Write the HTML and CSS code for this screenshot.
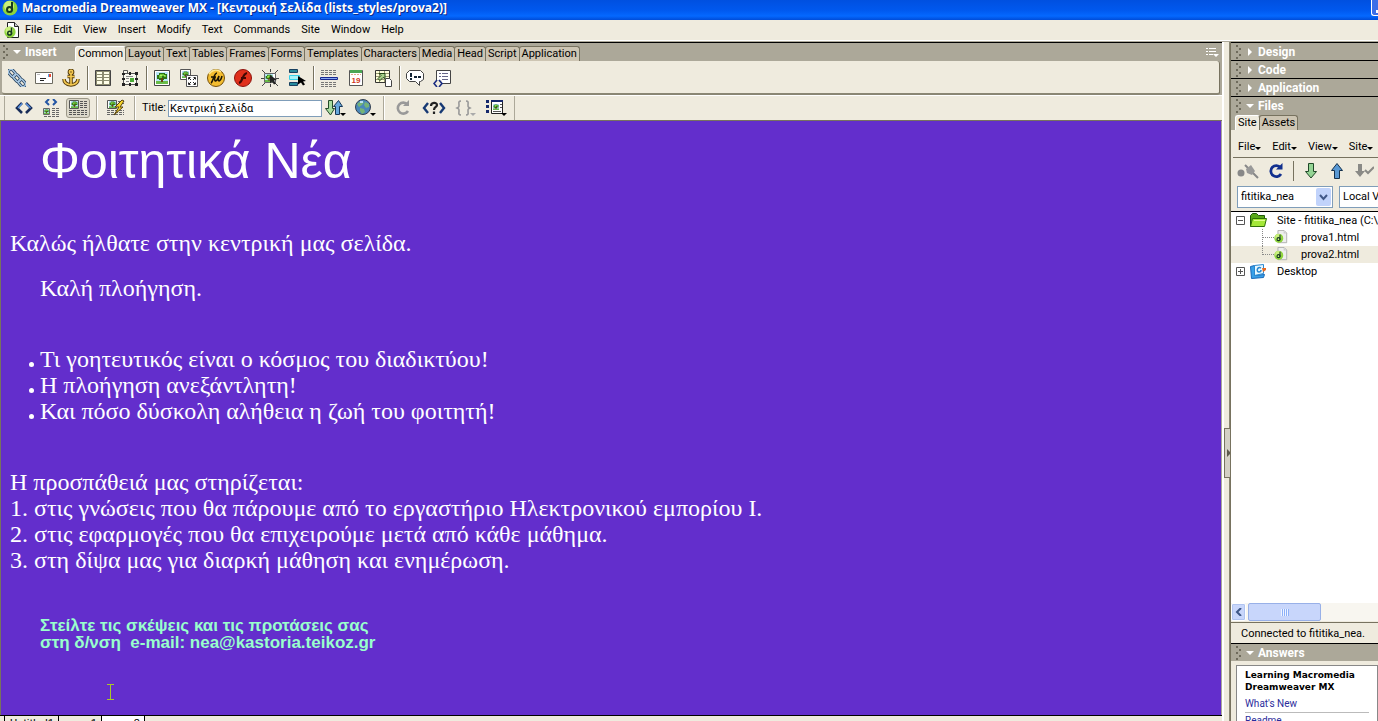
FILE: index.html
```
<!DOCTYPE html>
<html lang="el">
<head>
<meta charset="utf-8">
<title>Macromedia Dreamweaver MX</title>
<link rel="stylesheet" href="styles.css">
</head>
<body>
<svg class="defs" aria-hidden="true">
  <symbol id="tree" viewBox="0 0 12 12"><path fill="#b8e4f8" d="M0 0h12v12H0z"/><path fill="#68bc48" d="M0 9h12v3H0z"/><path fill="#2c7418" d="M3 1h6v1h2v5H8v1H3V7H1V3h2z"/><path fill="#70c838" d="M4 2h4v1h2v2H8V4H6v2H3V3h1z"/><path fill="#b0f068" d="M4 3h2v1H4zM8 3h1v1H8z"/><path fill="#694010" d="M5 6h2v4H5z"/></symbol>
  <symbol id="globe-d" viewBox="0 0 16 16"><circle cx="8" cy="8" r="7.5" fill="#8ed43c"/><circle cx="7" cy="6" r="5" fill="#c9f07c"/><path d="M10 2v8.500" stroke="#173a20" stroke-width="2"/><circle cx="7.500" cy="9.500" r="2.500" fill="none" stroke="#173a20" stroke-width="2"/></symbol>
  <symbol id="doc" viewBox="0 0 16 16"><path fill="#eee" stroke="#aaa" d="M4.500.5h7l3 3v11h-10z"/><path fill="#ccc" d="M11 1v3h3z"/><use href="#globe-d" x="0" y="4" width="11" height="11"/></symbol>
  <symbol id="grip" viewBox="0 0 6 14"><path fill="#6f6b5c" d="M0 0h2v2H0zM3 3h2v2H3zM0 6h2v2H0zM3 9h2v2H3zM0 12h2v2H0z"/></symbol>
</svg>

<header class="titlebar">
  <svg class="icon16" viewBox="0 0 16 16"><use href="#globe-d"/></svg>
  <h1 class="title">Macromedia Dreamweaver MX - [Κεντρική Σελίδα (lists_styles/prova2)]</h1>
  <button class="min" aria-label="Minimize"></button>
</header>

<nav class="menubar">
  <svg class="icon16" viewBox="0 0 16 16"><path fill="#fff" stroke="#222" d="M3.500.5h7l4 4v11h-11z"/><path fill="#ccc" stroke="#222" d="M10.500.5v4h4"/><use href="#globe-d" x="0" y="4" width="12" height="12"/></svg>
  <button>File</button><button>Edit</button><button>View</button><button>Insert</button><button>Modify</button><button>Text</button><button>Commands</button><button>Site</button><button>Window</button><button>Help</button>
</nav>

<div class="workspace">
<main class="left">
  <div class="insert-head">
    <svg class="grip" viewBox="0 0 6 14"><use href="#grip"/></svg>
    <svg class="tri" viewBox="0 0 8 8"><path fill="#fff" d="M0 2h8L4 6z"/></svg>
    <span class="panel-name insert-name">Insert</span>
    <div class="tabs">
      <button class="tab on">Common</button><button class="tab">Layout</button><button class="tab">Text</button><button class="tab">Tables</button><button class="tab">Frames</button><button class="tab">Forms</button><button class="tab">Templates</button><button class="tab">Characters</button><button class="tab">Media</button><button class="tab">Head</button><button class="tab">Script</button><button class="tab">Application</button>
    </div>
    <button class="options" aria-label="Options"><svg width="13" height="11" viewBox="0 0 13 11"><path fill="#fff" d="M0 1h2v1H0zM3 1h7v1H3zM0 4h2v1H0zM3 4h7v1H3zM0 7h2v1H0zM3 7h4v1H3zM7 7h6L10 10z"/></svg></button>
  </div>

  <div class="insert-bar">
    <div class="group">
      <button aria-label="Hyperlink"><svg viewBox="0 0 18 18" fill="none"><g stroke="#26405c" stroke-width="3"><rect x="-4" y="-2.500" width="8" height="5" rx="2.500" transform="translate(4 4) rotate(48)"/><rect x="-4" y="-2.500" width="8" height="5" rx="2.500" transform="translate(9 9) rotate(48)"/><rect x="-4" y="-2.500" width="8" height="5" rx="2.500" transform="translate(14 14) rotate(48)"/></g><g stroke="#a8c8e4" stroke-width="1.400"><rect x="-4" y="-2.500" width="8" height="5" rx="2.500" transform="translate(4 4) rotate(48)"/><rect x="-4" y="-2.500" width="8" height="5" rx="2.500" transform="translate(9 9) rotate(48)"/><rect x="-4" y="-2.500" width="8" height="5" rx="2.500" transform="translate(14 14) rotate(48)"/></g></svg></button>
      <button aria-label="Email Link"><svg viewBox="0 0 18 18"><path fill="#fff" stroke="#6c6a60" d="M.5 3.500h17v11H.5z"/><path fill="#e84830" d="M13 5h3v3h-3z"/><path fill="#58a8e8" d="M13 5h1v3h-1z"/><path stroke="#222" d="M5 9.500h6M5 11.500h4"/><path stroke="#bbb" d="M2 5.500h3"/></svg></button>
      <button aria-label="Named Anchor"><svg viewBox="0 0 18 18" fill="none"><g stroke="#5a4210" stroke-width="3.600"><circle cx="9" cy="3" r="1.600"/><path d="M9 5v11M5.500 7.500h7M2 10c0 4 3 5.500 7 6 4-.5 7-2 7-6"/></g><g stroke="#f4c850" stroke-width="1.600"><circle cx="9" cy="3" r="1.600"/><path d="M9 5v11M5.500 7.500h7M2 10c0 4 3 5.500 7 6 4-.5 7-2 7-6"/></g></svg></button>
    </div>
    <div class="group">
      <button aria-label="Table"><svg viewBox="0 0 18 18"><path fill="#8c8c70" stroke="#444" d="M1.500 1.500h15v15h-15z"/><path fill="#ffffe8" d="M3 3h5v2H3zM10 3h5v2h-5zM3 6h5v2H3zM10 6h5v2h-5zM3 9h5v2H3zM10 9h5v2h-5zM3 12h5v3H3zM10 12h5v3h-5z"/></svg></button>
      <button aria-label="Layer"><svg viewBox="0 0 18 18"><path fill="#f7f7ee" stroke="#555" d="M2.500 4.500h13v11h-13zM2.500 1.500h4v3h-4z"/><path stroke="#888" d="M5 7.500h7M5 9.500h3M5 12.500h3"/><path fill="#4cac38" d="M9 9h4v4H9z"/><path fill="#222" d="M1 4h3v2H1zM8 3h2v3H8zM14 3h3v3h-3zM1 9h3v2H1zM14 9h3v2h-3zM1 14h3v3H1zM8 14h2v3H8zM14 14h3v3h-3z"/></svg></button>
    </div>
    <div class="group">
      <button aria-label="Image"><svg viewBox="0 0 18 18"><path fill="#fff" stroke="#444" d="M1.500 1.500h15v15h-15z"/><use href="#tree" x="3" y="3" width="12" height="12"/></svg></button>
      <button aria-label="Image Placeholder"><svg viewBox="0 0 18 18"><path fill="#fff" stroke="#555" d="M.5.5h10v10H.5z"/><use href="#tree" x="2" y="2" width="7" height="7"/><path fill="#fff" stroke="#555" d="M6.500 6.500h11v11h-11z"/><path stroke="#222" fill="none" d="M8.500 10.500v-2h2M13.500 8.500h2v2M8.500 13.500v2h2M13.500 15.500h2v-2M9 9l2 2M15 9l-2 2M9 15l2-2M15 15l-2-2"/></svg></button>
      <button aria-label="Fireworks HTML"><svg viewBox="0 0 18 18"><circle cx="9" cy="9" r="8.500" fill="#f3bd30" stroke="#754f08"/><path d="M2 5a8 8 0 0 1 12-2" stroke="#ffe890" stroke-width="1.500" fill="none"/><path d="M4 14c2-1 3-10 6-10M4 8h5M8 7c-1 5 0 6 2 4l2-4c-2 6 1 7 3 0" fill="none" stroke="#1b1505" stroke-width="1.600"/></svg></button>
      <button aria-label="Flash"><svg viewBox="0 0 18 18"><circle cx="9" cy="9" r="8.500" fill="#e0301c" stroke="#8d120c"/><path d="M5 14c4-1 3-9 8-10M7 9h5" fill="none" stroke="#400804" stroke-width="2.200"/></svg></button>
      <button aria-label="Rollover Image"><svg viewBox="0 0 18 18"><path fill="#fff" stroke="#666" d="M3.500 4.500h11v9h-11z"/><use href="#tree" x="4" y="5" width="8" height="8"/><path stroke="#444" d="M1 1l3 3M17 1l-3 3M1 17l3-3M14 14l3 3M9.500 0v3M0 9.500h3M9.500 15v3M15 9.500h3"/><path fill="#222" d="M9 6l7 5-3 .5 2 3-2 1-2-3-2 2z"/></svg></button>
      <button aria-label="Navigation Bar"><svg viewBox="0 0 18 18"><path fill="#268a9c" stroke="#184060" d="M1.500.5h8v3h-8zM1.500 13.500h8v3h-8z"/><path fill="#a8f4f8" stroke="#38d0e8" d="M1.500 6.500h10v4h-10z"/><path fill="#000" d="M10 7l8 5-3 .5 2 3-2 1-2-3-3 2z"/></svg></button>
    </div>
    <div class="group">
      <button aria-label="Horizontal Rule"><svg viewBox="0 0 18 18"><path stroke="#777" stroke-dasharray="3 1" d="M1 1.500h16M1 3.500h16M1 5.500h16M1 13.500h16M1 15.500h16M1 17.500h16"/><path fill="#88a8f0" stroke="#182890" d="M.5 8.500h17v2H.5z"/></svg></button>
      <button aria-label="Date"><svg viewBox="0 0 18 18"><path fill="#fff" stroke="#555" d="M2.500 1.500h13v15h-13z"/><path fill="#4ba655" d="M3 1h12v3H3z"/><path stroke="#e0a890" stroke-dasharray="2 1" d="M4 5.500h10"/><text x="9" y="14" class="date-num">19</text></svg></button>
      <button aria-label="Tabular Data"><svg viewBox="0 0 18 18"><path fill="#ffffdc" stroke="#333" d="M1.500 1.500h14v12h-14z"/><path stroke="#999970" d="M2 4.500h13M2 7.500h13M2 10.500h13M5.500 2v11M10.500 2v11"/><path fill="#a8d088" stroke="#234618" d="M5 4.500h6v5l-2-1-3 3-2-2 3-3z"/><path fill="#fff" stroke="#444" d="M11.500 9.500h4l2 2v6h-6z"/></svg></button>
    </div>
    <div class="group">
      <button aria-label="Comment"><svg viewBox="0 0 18 18"><path fill="#fff" stroke="#444" d="M3.500 1.500h11l3 3v6l-3 2h-1v4l-4-4h-6l-3-3v-5z"/><path stroke="#123" stroke-width="2" d="M5 4v4M5 9v2M8 8h3M12 8h3"/></svg></button>
      <button aria-label="Tag Chooser"><svg viewBox="0 0 18 18"><path fill="#fff" stroke="#444" d="M3.500 1.500h14v13h-14z"/><path stroke="#668" d="M6 4.500h2M9 4.500h6M6 7.500h2M9 7.500h6M9 10.500h6"/><path fill="#efebde" d="M0 11h9v7H0z"/><path fill="none" stroke="#1a2c80" stroke-width="1.600" d="M4 11l-3 3.500L4 18M6 11l3 3.500L6 18"/></svg></button>
    </div>
  </div>

  <div class="doc-bar">
    <div class="dgroup tight views">
      <button aria-label="Code View"><svg viewBox="0 0 18 18"><path fill="none" stroke="#182c58" stroke-width="2.600" d="M7 4L2 9l5 5M11 4l5 5-5 5"/><path fill="none" stroke="#5b98e8" stroke-width="1.200" d="M7 4.500L3 9M11 4.500L15.500 9"/></svg></button>
      <button aria-label="Split View"><svg viewBox="0 0 18 18"><path fill="none" stroke="#2456a4" stroke-width="2" d="M7 0L4 3l3 3M11 0l3 3-3 3"/><path fill="#fff" stroke="#666" d="M1.500 9.500h6v6h-6z"/><use href="#tree" x="2" y="10" width="5" height="5"/><path stroke="#666" stroke-dasharray="3 1" d="M10 9.500h7M10 11.500h7M10 13.500h7M10 15.500h7M2 17.500h15"/></svg></button>
      <button class="pressed" aria-label="Design View"><svg viewBox="0 0 18 18"><path fill="#fff" stroke="#555" d="M.5 1.500h9v8h-9z"/><use href="#tree" x="2" y="2" width="7" height="7"/><path stroke="#555" stroke-dasharray="3 1" d="M11 2.500h7M11 4.500h7M11 6.500h7M11 8.500h7M0 11.500h18M0 13.500h18M0 15.500h18"/></svg></button>
    </div>
    <div class="dgroup live">
      <button aria-label="Live Data View"><svg viewBox="0 0 18 18"><path fill="#fff" stroke="#555" d="M.5 1.500h9v8h-9z"/><use href="#tree" x="2" y="2" width="7" height="7"/><path stroke="#666" stroke-dasharray="3 1" d="M11 2.500h6M11 4.500h6M0 11.500h17M0 13.500h17M0 15.500h17"/><path fill="#f7d62c" stroke="#57430c" d="M15 1l-7 7h4l-5 8 9-8h-3l4-6z"/></svg></button>
    </div>
    <div class="dgroup">
      <label for="doc-title">Title:</label>
      <input id="doc-title" type="text" value="Κεντρική Σελίδα">
      <button aria-label="File Management"><svg viewBox="0 0 21 18"><path fill="#a8dca0" stroke="#234a28" d="M3.500 1.500h4v8h2L5.500 16 .5 9.500h3z"/><path fill="#68a8dc" stroke="#183858" d="M10.500 15.500v-8h-2l5-6 4 6h-3v8z"/><path fill="#000" d="M15 14h6l-3 3z"/></svg></button>
      <button class="spaced" aria-label="Preview in Browser"><svg viewBox="0 0 21 18"><circle cx="8" cy="8" r="7.500" fill="#4a88ba" stroke="#333f50"/><path fill="#75b477" d="M2 5l4-3 3 1-2 3-3 2zM10 3l4 2v3l-3 1-2-3zM5 9l4 1 1 3-3 2-2-3z"/><path fill="#b9e0f4" d="M5 2h3v2H5z"/><path fill="#000" d="M15 14h6l-3 3z"/></svg></button>
    </div>
    <div class="dgroup wide">
      <button aria-label="Refresh"><svg viewBox="0 0 18 18"><path fill="none" stroke="#999" stroke-width="2.600" d="M13.500 5.500A5.500 5.500 0 1 0 14 12"/><path fill="#999" d="M9 7h6V1z"/></svg></button>
      <button aria-label="Reference"><svg viewBox="0 0 24 18"><path fill="none" stroke="#163974" stroke-width="2.400" d="M6 4L2 9l4 5M18 4l4 5-4 5"/><path fill="none" stroke="#222" stroke-width="2.200" d="M9 7c0-4 6-4 6-1 0 2-3 2-3 5M12 12.500V15"/></svg></button>
      <button aria-label="Code Navigation"><svg viewBox="0 0 21 18"><path fill="none" stroke="#999" stroke-width="1.600" d="M6 2C3 2 4 4 4 6s0 2-2 3c2 1 2 1 2 3s-1 4 2 4M11 2c3 0 2 2 2 4s0 2 2 3c-2 1-2 1-2 3s1 4-2 4"/><path fill="#aaa" d="M15 14h6l-3 3z"/></svg></button>
      <button aria-label="View Options"><svg viewBox="0 0 21 18"><path fill="#fff" stroke="#222" d="M5.500 2.500h11v12h-11z"/><path fill="#14286c" d="M0 1h3v3H0zM5 1h12v2H5zM0 6h3v3H0zM0 11h3v3H0z"/><use href="#tree" x="7" y="5" width="6" height="6"/><path stroke="#555" d="M7 12.500h8M14 5.500h2M14 8.500h2"/><path fill="#000" d="M15 14h6l-3 3z"/></svg></button>
    </div>
    <div class="dfill"></div>
  </div>

  <article class="page">
    <h2 class="page-title">Φοιτητικά Νέα</h2>
    <p class="welcome">Καλώς ήλθατε στην κεντρική μας σελίδα.</p>
    <p class="browse">Καλή πλοήγηση.</p>
    <ul class="bullets">
      <li>Τι γοητευτικός είναι ο κόσμος του διαδικτύου!</li>
      <li>Η πλοήγηση ανεξάντλητη!</li>
      <li>Και πόσο δύσκολη αλήθεια η ζωή του φοιτητή!</li>
    </ul>
    <p>Η προσπάθειά μας στηρίζεται:<br>1. στις γνώσεις που θα πάρουμε από το εργαστήριο Ηλεκτρονικού εμπορίου Ι.<br>2. στις εφαρμογές που θα επιχειρούμε μετά από κάθε μάθημα.<br>3. στη δίψα μας για διαρκή μάθηση και ενημέρωση.</p>
    <address class="contact">Στείλτε τις σκέψεις και τις προτάσεις σας<br>στη δ/νση&nbsp; e-mail: nea@kastoria.teikoz.gr</address>
    <svg class="caret" viewBox="0 0 7 16"><path stroke="#a8c828" fill="none" d="M0 .5h7M0 15.500h7M3.500 0v16"/></svg>
  </article>
  <div class="doc-tabs">
    <button>Untitled1</button><button>prova1</button><button class="on">prova2</button>
  </div>
</main>

<div class="splitter"><button aria-label="Collapse panels"><svg width="4" height="8" viewBox="0 0 4 8"><path fill="#5c594c" d="M0 0l4 4-4 4z"/></svg></button></div>

<aside class="right">
  <button class="panel"><svg class="grip" viewBox="0 0 6 14"><use href="#grip"/></svg><svg class="tri" viewBox="0 0 8 8"><path fill="#fff" d="M2 0v8l4-4z"/></svg><span class="panel-name">Design</span></button>
  <button class="panel"><svg class="grip" viewBox="0 0 6 14"><use href="#grip"/></svg><svg class="tri" viewBox="0 0 8 8"><path fill="#fff" d="M2 0v8l4-4z"/></svg><span class="panel-name">Code</span></button>
  <button class="panel"><svg class="grip" viewBox="0 0 6 14"><use href="#grip"/></svg><svg class="tri" viewBox="0 0 8 8"><path fill="#fff" d="M2 0v8l4-4z"/></svg><span class="panel-name">Application</span></button>
  <button class="panel"><svg class="grip" viewBox="0 0 6 14"><use href="#grip"/></svg><svg class="tri" viewBox="0 0 8 8"><path fill="#fff" d="M0 2h8L4 6z"/></svg><span class="panel-name">Files</span></button>
  <div class="tabs side"><button class="tab on">Site</button><button class="tab">Assets</button></div>
  <div class="site-menu"><button>File</button><button>Edit</button><button>View</button><button>Site</button></div>
  <div class="site-tools">
    <button aria-label="Connect"><svg viewBox="0 0 22 18"><circle cx="4" cy="11" r="3.500" fill="#888"/><path stroke="#888" stroke-width="2" d="M8 3l4 4M14 9l7 7"/><path fill="#999" d="M9 7l5-4 4 6-3 4-5-2z"/></svg></button>
    <button aria-label="Refresh"><svg viewBox="0 0 18 18"><path fill="none" stroke="#12308e" stroke-width="2.800" d="M13.500 5.500A5.500 5.500 0 1 0 14 12"/><path fill="#12308e" d="M9 7.500h6.500V1z"/></svg></button>
    <i class="sep"></i>
    <button aria-label="Get"><svg viewBox="0 0 18 18"><path fill="#94d494" stroke="#204828" d="M6.500 1.500h5v8h3L9 16 3.500 9.500h3z"/></svg></button>
    <button aria-label="Put"><svg viewBox="0 0 18 18"><path fill="#5898d4" stroke="#14304c" d="M6.500 16.500h5v-8h3L9 1.500 3.500 8.500h3z"/></svg></button>
    <button aria-label="Check Out"><svg viewBox="0 0 20 18"><path fill="#8a8a86" d="M4 2h4v7h3l-5 6-5-6h3z"/><path fill="none" stroke="#8a8a86" stroke-width="2" d="M11 8l3 3 6-6"/></svg></button>
  </div>
  <div class="site-selects">
    <select aria-label="Site"><option>fititika_nea</option></select>
    <select aria-label="View"><option>Local View</option></select>
  </div>
  <div class="tree">
    <div class="row"><svg class="box" viewBox="0 0 9 9"><path fill="#fff" stroke="#555" d="M.5.5h8v8h-8zM2 4.500h5"/></svg><svg class="node" viewBox="0 0 17 15"><path fill="#58a818" stroke="#205808" d="M.5 13.500v-11l2-2h4l2 2h6v3"/><path fill="#a4e838" stroke="#307008" d="M.5 13.500l2-8h14l-2 8z"/><path fill="#e0ff90" d="M4 7h11v1H4z"/></svg><span>Site - fititika_nea (C:\My Sites)</span></div>
    <div class="row file"><svg class="branch" viewBox="0 0 26 17"><path stroke="#888" stroke-dasharray="1 1" fill="none" d="M.5 0v17M1 8.500h11"/><use href="#doc" x="12" y="1" width="14" height="14"/></svg><span>prova1.html</span></div>
    <div class="row file sel"><svg class="branch" viewBox="0 0 26 17"><path stroke="#888" stroke-dasharray="1 1" fill="none" d="M.5 0v9M1 8.500h11"/><use href="#doc" x="12" y="1" width="14" height="14"/></svg><span>prova2.html</span></div>
    <div class="row"><svg class="box" viewBox="0 0 9 9"><path fill="#fff" stroke="#555" d="M.5.5h8v8h-8zM2 4.500h5M4.500 2v5"/></svg><svg class="node" viewBox="0 0 17 15"><path fill="#38a0e8" stroke="#1868b8" d="M.5 2.500l4-1v10l10-1-1 3-12 1z"/><path fill="#e8f8ff" stroke="#2888d0" d="M4.500 1.500l9-1v9l-9 2z"/><path fill="none" stroke="#2888d0" stroke-width="1.500" d="M11 4c-4-2-5 4-2 4 2 0 2-2 2-2"/><path fill="#e86820" d="M12 4h4v2l-3 2z"/></svg><span>Desktop</span></div>
  </div>
  <div class="scroll"><button aria-label="Scroll left"><svg width="8" height="8" viewBox="0 0 8 8"><path fill="none" stroke="#3d5686" stroke-width="2" d="M6 0L2 4l4 4"/></svg></button><i class="thumb"></i></div>
  <div class="status">Connected to fititika_nea.</div>
  <button class="panel"><svg class="grip" viewBox="0 0 6 14"><use href="#grip"/></svg><svg class="tri" viewBox="0 0 8 8"><path fill="#fff" d="M0 2h8L4 6z"/></svg><span class="panel-name">Answers</span></button>
  <div class="answers">
    <div class="answers-page">
      <h3>Learning Macromedia<br>Dreamweaver MX</h3>
      <a href="#new">What's New</a>
      <a href="#readme">Readme</a>
    </div>
  </div>
</aside>
</div>
</body>
</html>
```
FILE: styles.css
```
* { box-sizing: border-box; }
body { margin: 0; height: 100vh; overflow: hidden; display: flex; flex-direction: column; background: #efebde; color: #000; font: 11px/14px Roboto, "Liberation Sans", sans-serif; }
button { font: inherit; color: inherit; background: none; border: 0; padding: 0; margin: 0; white-space: nowrap; }
button svg { display: block; }
.defs { position: absolute; width: 0; height: 0; }
.icon16 { width: 16px; height: 16px; flex: none; }

.titlebar { flex: none; height: 20px; display: flex; align-items: flex-start; padding-left: 2px; background: linear-gradient(#0050e0, #0058ee 50%, #0468ff 80%, #004cd8); overflow: hidden; }
.title { margin: 0 auto 0 4px; font: bold 12px/15px "Open Sans", "Noto Sans", sans-serif; color: #fff; text-shadow: 1px 1px #0a2a8a; white-space: nowrap; }
.min { width: 7px; height: 16px; border: 1px solid #fff; border-width: 0 0 1px 1px; border-radius: 0 0 0 3px; background: linear-gradient(#fff, #fff) 4px 10px / 3px 3px no-repeat, #3c6ee8; }

.menubar { flex: none; height: 22px; display: flex; gap: 11px; padding: 1px 4px 0; border-bottom: 1px solid #aca899; box-shadow: inset 0 -1px #fff; }
.menubar .icon16 { margin: 1px -6px 0 0; }
.menubar button { height: 18px; }

.workspace { flex: 1; min-height: 0; display: flex; }
.left { flex: 1; min-width: 0; display: flex; flex-direction: column; background: #aca899; border-top: 1px solid #000; }
.grip { width: 6px; height: 14px; flex: none; }
.tri { width: 8px; height: 8px; flex: none; }
.panel-name { font: bold 12px/16px Roboto, "Liberation Sans", sans-serif; color: #fff; }

.insert-head { flex: none; height: 18px; display: flex; align-items: center; gap: 4px; padding: 0 3px; }
.insert-name { width: 46px; }
.tabs { display: flex; align-self: flex-end; }
.tab { height: 15px; padding: 0 2px; line-height: 14px; background: #cdc5b3; border: 1px solid #77725f; border-bottom: 0; border-radius: 3px 3px 0 0; }
.tab + .tab { margin-left: -1px; }
.tab.on { background: #efebde; border-color: #fff #77725f #fff #fff; }
.options { margin-left: auto; }

.insert-bar { flex: none; height: 34px; display: flex; align-items: center; margin: 0 2px; padding-top: 2px; background: #efebde; border: 1px solid #77725f; border-width: 0 1px 2px 0; border-bottom-color: #8a8674; border-radius: 0 3px 3px 3px; }
.group { display: flex; gap: 9px; padding: 3px 6px; border-left: 1px solid #77725f; box-shadow: inset 1px 0 #fff; margin-left: 1px; }
.group:first-child { border-left: 0; box-shadow: none; margin-left: 0; }
.group button, .group svg { width: 18px; height: 18px; }
.date-num { font: bold 8px "Liberation Sans", sans-serif; fill: #d03820; text-anchor: middle; }

.doc-bar { flex: none; height: 26px; display: flex; background: #efebde; border-top: 1px solid #fff; border-bottom: 1px solid #77725f; }
.dgroup { display: flex; align-items: center; padding: 0 6px; border-right: 1px solid #aca899; border-left: 1px solid #fff; }
.dgroup button { width: 24px; height: 20px; display: flex; align-items: center; justify-content: center; }
.dgroup svg { height: 18px; flex: none; }
.tight { gap: 3px; }
.views { margin-left: 4px; padding-left: 7px; border-left-color: #aca899; }
.wide { gap: 7px; }
.dgroup .spaced { margin-left: 6px; }
.pressed { background: #dcd8ca; border: 1px solid #9b9787; border-radius: 3px; }
.dgroup input { width: 154px; height: 17px; margin: 0 1px 0 2px; padding: 0 1px; border: 1px solid #7f9db9; font: 11px/14px Roboto, sans-serif; background: #fff; }
.dfill { flex: 1; }

.page { position: relative; flex: 1; min-height: 0; overflow: hidden; padding: 13px 9px; margin-right: 1px; background: #632ecc; border-left: 1px solid #77725f; color: #fff; font: 24px/26px "Liberation Serif", serif; }
.page p { margin: 0; }
.page-title { margin: 0 0 42px 30px; font: 50px/54px "Liberation Sans", sans-serif; }
.page .welcome { margin-bottom: 19px; }
.page .browse { margin: 0 0 45px 30px; }
.bullets { margin: 0 0 45px; padding: 0 0 0 30px; list-style: none; }
.bullets li { position: relative; }
.bullets li::before { content: ""; position: absolute; left: -11px; top: 16px; width: 5px; height: 5px; border-radius: 50%; background: #fff; }
.contact { margin: 44px 0 0 30px; font: bold 17px/17px "Liberation Sans", sans-serif; color: #9fc; }
.caret { position: absolute; left: 106px; top: 563px; width: 7px; height: 16px; }
.doc-tabs { flex: none; height: 6px; display: flex; padding-left: 4px; background: #efebde; border-top: 1px solid #000; overflow: hidden; }
.doc-tabs button { width: 43px; height: 16px; text-align: right; padding-right: 4px; border-right: 1px solid #000; }
.doc-tabs button:first-child { width: 55px; border-left: 1px solid #000; }
.doc-tabs .on { background: #fff; }

.splitter { flex: none; width: 9px; display: flex; align-items: center; border-left: 2px solid #fff; border-right: 2px solid #8a8674; margin-right: -1px; }
.splitter button { flex: none; width: 8px; height: 50px; margin-top: 142px; border: 1px solid #77725f; background: #d4d0c4; padding-left: 2px; }

.right { flex: none; width: 148px; display: flex; flex-direction: column; overflow: hidden; white-space: nowrap; border-left: 1px solid #77725f; }
.panel { flex: none; height: 18px; display: flex; align-items: center; gap: 4px; padding-left: 5px; background: #aca899; border-top: 1px solid #000; }
.tabs.side { align-self: stretch; height: 16px; padding: 1px 4px 0; background: #aca899; }
.site-menu { display: flex; gap: 11px; margin: 10px 0 0 2px; padding: 0 5px 3px; border-bottom: 1px solid #77725f; }
.site-menu button::after { content: ""; display: inline-block; border: 3px solid transparent; border-top-color: #000; border-bottom: 0; }
.site-tools { display: flex; align-items: center; gap: 8px; height: 26px; padding-left: 6px; }
.site-tools svg { height: 18px; }
.site-tools .sep { height: 20px; border-left: 1px solid #77725f; }
.site-selects { display: flex; gap: 6px; padding: 2px 0 3px 6px; border-bottom: 1px solid #000; }
.site-selects select { appearance: none; flex: none; width: 96px; height: 22px; margin: 0; padding: 0 3px; border: 1px solid #7f9db9; border-radius: 0; font: inherit; color: #000; background: #fff; }
.site-selects select:first-child { background: url("data:image/svg+xml,%3Csvg xmlns='http://www.w3.org/2000/svg' width='15' height='18'%3E%3Crect width='15' height='18' rx='2' fill='%23c1d3fb'/%3E%3Cpath d='M4 7l3.500 4L11 7' fill='none' stroke='%23405888' stroke-width='2'/%3E%3C/svg%3E") right 1px center no-repeat #fff; }
.tree { flex: 1; min-height: 0; background: #fff; }
.row { height: 17px; display: flex; align-items: center; padding-left: 5px; gap: 5px; line-height: 17px; }
.box { width: 9px; height: 9px; flex: none; }
.node { width: 17px; height: 15px; flex: none; }
.row .node { margin-right: 5px; }
.file { padding-left: 31px; gap: 13px; }
.branch { width: 26px; height: 17px; flex: none; }
.sel { background: #efebde; }
.scroll { flex: none; height: 18px; display: flex; gap: 2px; background: #f8f6f0; }
.scroll button { width: 15px; display: flex; align-items: center; justify-content: center; background: #c8d6fb; border: 1px solid #fff; border-radius: 2px; box-shadow: inset 0 0 0 1px #b0c4f0; }
.thumb { width: 73px; border: 1px solid #98b0e8; border-radius: 2px; background: repeating-linear-gradient(90deg, #eef4ff 0 1px, #8cb0f8 1px 2px) center / 8px 7px no-repeat, #c8d6fb; }
.status { flex: none; height: 21px; margin-top: 1px; padding-left: 10px; line-height: 21px; border-top: 1px solid #77725f; }
.answers { flex: none; height: 60px; padding: 4px 0 0 5px; background: #efebde; }
.answers-page { height: 60px; padding: 3px 8px; border: 1px solid #888; background: #fff; }
.answers h3 { margin: 0 0 4px; font: bold 9px/12px "DejaVu Sans", sans-serif; }
.answers a { display: block; margin-bottom: 1px; padding-bottom: 2px; font-size: 10px; line-height: 13px; color: #2c2c9c; text-decoration: none; border-bottom: 1px solid #bbb; }
```
